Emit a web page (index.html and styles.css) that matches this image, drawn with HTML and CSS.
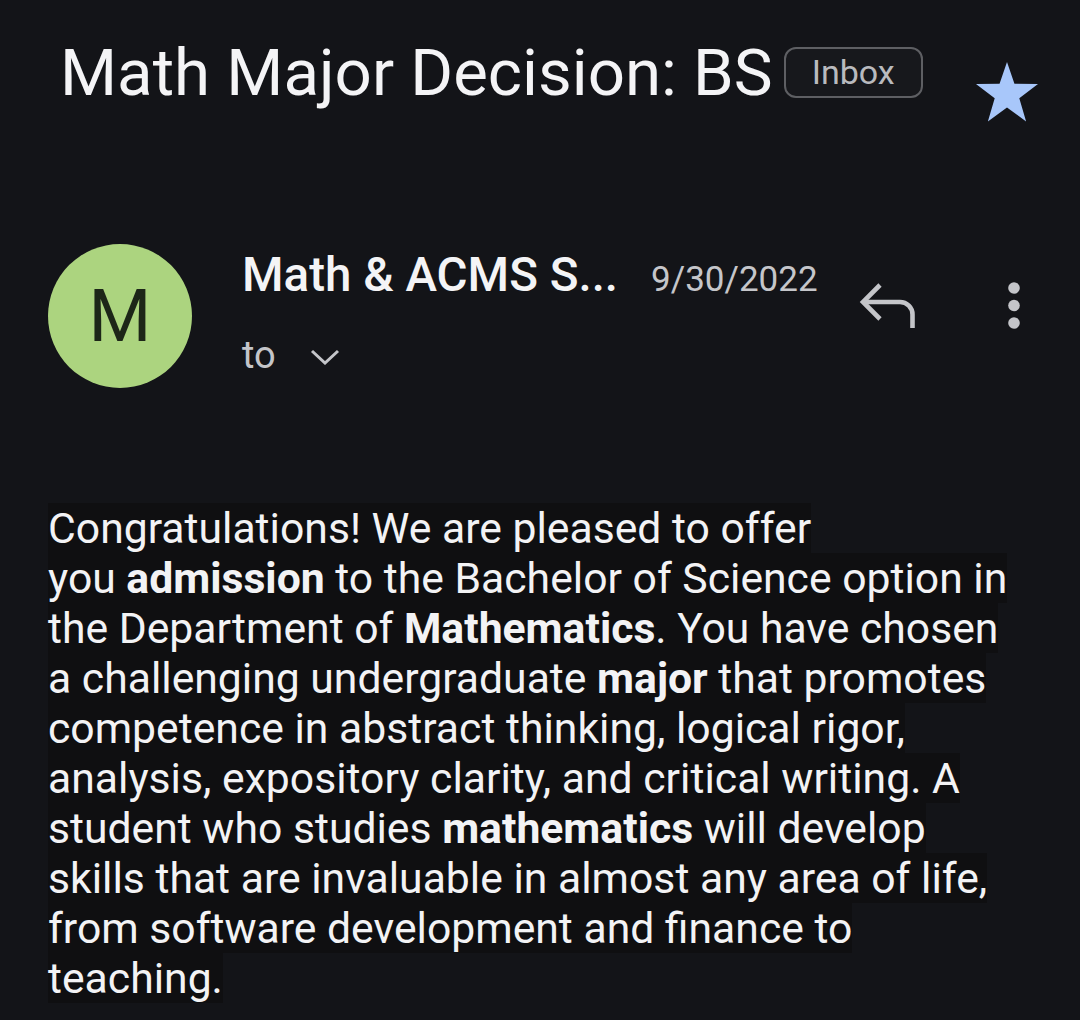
FILE: index.html
```html
<!DOCTYPE html>
<html lang="en">
<head>
<meta charset="utf-8">
<title>Math Major Decision: BS</title>
<link rel="stylesheet" href="styles.css">
</head>
<body>
<header class="subject">
  <h1 class="subject-title">Math Major Decision: BS</h1>
  <span class="label">Inbox</span>
  <svg class="star" viewBox="0 0 60 58" width="62" height="60" aria-hidden="true">
    <polygon points="30,0 37.2,21 60,21.3 41.9,35 48.5,57.5 30,44 11.5,57.5 18.1,35 0,21.3 22.8,21" fill="#a8c7fa"/>
  </svg>
</header>

<section class="sender">
  <div class="avatar">M</div>
  <div class="meta">
    <div class="meta-top">
      <span class="from">Math &amp; ACMS S...</span>
      <span class="date">9/30/2022</span>
    </div>
    <div class="meta-to">
      <span class="to">to</span>
      <svg class="chevron" viewBox="0 0 30 16" width="30" height="16" aria-hidden="true">
        <polyline points="2,2 15,14 28,2" fill="none" stroke="#c4c5c9" stroke-width="3"/>
      </svg>
    </div>
  </div>
  <div class="actions">
    <svg class="reply" viewBox="0 0 60 48" width="60" height="48" aria-hidden="true">
      <polyline points="22,3 5,20 22,37" fill="none" stroke="#c4c5c9" stroke-width="4.6" stroke-linejoin="miter"/>
      <path d="M5 20 H42 A12.5 12.5 0 0 1 54.5 32.5 V46" fill="none" stroke="#c4c5c9" stroke-width="4.6"/>
    </svg>
    <svg class="more" viewBox="0 0 24 48" width="24" height="48" aria-hidden="true">
      <circle cx="12" cy="6" r="5.8" fill="#c4c5c9"/>
      <circle cx="12" cy="23.5" r="5.8" fill="#c4c5c9"/>
      <circle cx="12" cy="41" r="5.8" fill="#c4c5c9"/>
    </svg>
  </div>
</section>

<article class="message">
  <span class="line">Congratulations! We are pleased to offer</span>
  <span class="line">you <b>admission</b> to the Bachelor of Science option in</span>
  <span class="line">the Department of <b>Mathematics</b>. You have chosen</span>
  <span class="line">a challenging undergraduate <b>major</b> that promotes</span>
  <span class="line">competence in abstract thinking, logical rigor,</span>
  <span class="line">analysis, expository clarity, and critical writing. A</span>
  <span class="line">student who studies <b>mathematics</b> will develop</span>
  <span class="line">skills that are invaluable in almost any area of life,</span>
  <span class="line">from software development and finance to</span>
  <span class="line">teaching.</span>
</article>
</body>
</html>
```

FILE: styles.css
```css
html, body {
  margin: 0;
  padding: 0;
  background: #131418;
}

body {
  width: 1080px;
  height: 1020px;
  overflow: hidden;
  font-family: Roboto, "Liberation Sans", sans-serif;
  color: #f2f2f4;
}

.subject {
  display: flex;
  align-items: center;
  padding: 22px 42px 0 60px;
}

.subject-title {
  margin: 0;
  font-size: 65.4px;
  line-height: 77px;
  font-weight: 400;
  color: #f4f4f6;
  white-space: nowrap;
}

.label {
  box-sizing: border-box;
  height: 51px;
  margin-left: 11px;
  padding: 0 26px;
  display: flex;
  align-items: center;
  border: 2px solid #5e5f63;
  border-radius: 12px;
  font-size: 34px;
  color: #b9babe;
  background: #17181c;
}

.star {
  margin-left: auto;
  align-self: flex-start;
  margin-top: 40px;
}

.sender {
  display: flex;
  align-items: flex-start;
  margin-top: 122px;
  padding: 0 54px 0 48px;
}

.avatar {
  width: 144px;
  height: 144px;
  flex: none;
  border-radius: 50%;
  background: #acd47f;
  color: #1d2618;
  font-size: 72px;
  display: flex;
  align-items: center;
  justify-content: center;
}

.meta {
  margin-left: 50px;
  margin-top: 5px;
  flex: 1;
}

.meta-top {
  display: flex;
  align-items: baseline;
  line-height: 52px;
}

.from {
  font-size: 47.5px;
  font-weight: 500;
  color: #f4f4f6;
}

.date {
  margin-left: 33px;
  font-size: 35px;
  color: #c5c6ca;
}

.meta-to {
  display: flex;
  align-items: center;
  margin-top: 23px;
  line-height: 52px;
}

.to {
  font-size: 38px;
  color: #c4c5c9;
}

.chevron {
  margin-left: 34px;
  margin-top: 4px;
}

.actions {
  display: flex;
  align-items: flex-start;
  margin-top: 38px;
  gap: 84px;
}

.message {
  display: block;
  margin-top: 115px;
  padding-left: 48px;
  font-size: 42.7px;
  line-height: 50px;
  color: #f3f3f5;
}

.line {
  display: block;
  width: fit-content;
  background: #0f0f11;
  white-space: nowrap;
}

.message b {
  font-weight: 700;
}
```
